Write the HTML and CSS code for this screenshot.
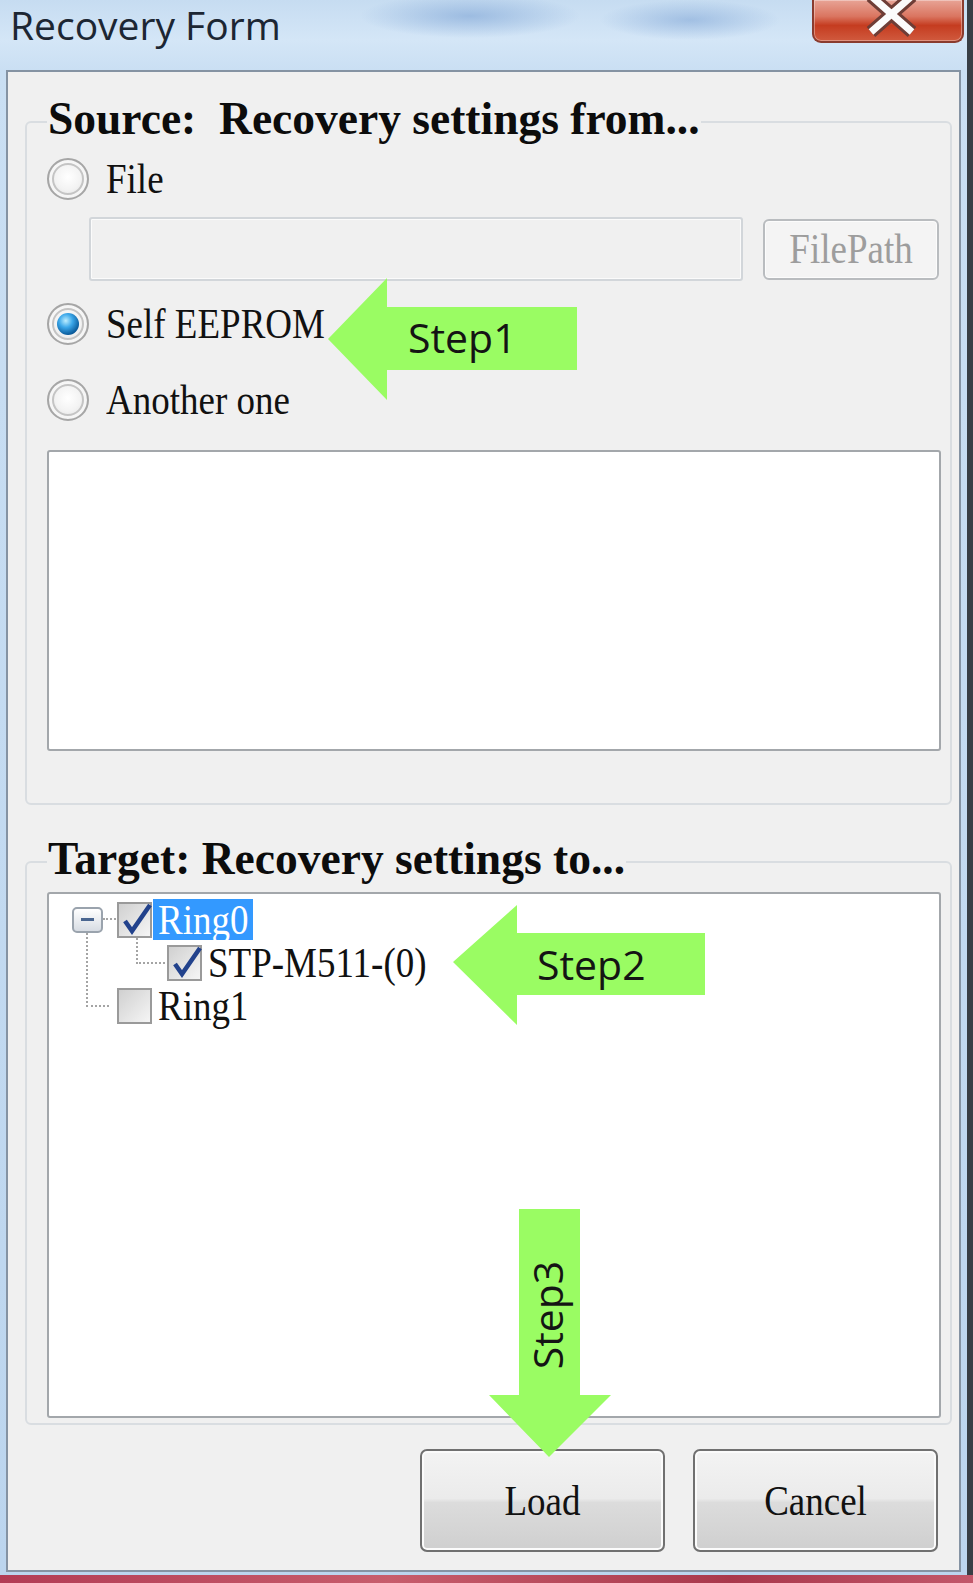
FILE: index.html
```html
<!DOCTYPE html>
<html>
<head>
	<meta charset="utf-8">
	<title>Recovery Form</title>
	<link rel="stylesheet" href="styles.css">
</head>
<body>
	<div class="window">
		<div class="titlebar">
			<span class="title">Recovery Form</span>
			<div class="close">
				<svg width="152" height="43" viewBox="0 0 152 43">
					<path d="M59 -4 L100 32 M100 -4 L59 32" stroke="#6e3d36" stroke-width="13" fill="none"/>
					<path d="M59 -4 L100 32 M100 -4 L59 32" stroke="#fbfbfb" stroke-width="7" fill="none"/>
				</svg>
			</div>
		</div>

		<div class="client">
			<fieldset class="group source">
				<legend>Source:&nbsp; Recovery settings from...</legend>
				<div class="opt"><span class="radio"></span><span class="txt">File</span></div>
				<div class="pathrow">
					<div class="pathbox"></div>
					<div class="btn-path"><span class="txt">FilePath</span></div>
				</div>
				<div class="opt eeprom"><span class="radio on"></span><span class="txt">Self EEPROM</span></div>
				<div class="opt another"><span class="radio"></span><span class="txt">Another one</span></div>
				<div class="listbox"></div>
			</fieldset>

			<fieldset class="group target">
				<legend>Target: Recovery settings to...</legend>
				<div class="tree">
					<div class="node root">
						<span class="expander"></span>
						<span class="check">
							<svg width="36" height="36" viewBox="0 0 36 36">
								<rect x="1" y="1" width="33" height="34" fill="url(#cb)" stroke="#9a9a9a" stroke-width="2"/>
								<path d="M8 19 L15 29 L33 3" stroke="#22428c" stroke-width="4.5" fill="none"/>
							</svg>
						</span>
						<span class="name sel"><span class="txt">Ring0</span></span>
					</div>
					<div class="node child">
						<span class="check">
							<svg width="36" height="36" viewBox="0 0 36 36">
								<rect x="1" y="1" width="33" height="34" fill="url(#cb)" stroke="#9a9a9a" stroke-width="2"/>
								<path d="M8 19 L15 29 L33 3" stroke="#22428c" stroke-width="4.5" fill="none"/>
							</svg>
						</span>
						<span class="name"><span class="txt">STP-M511-(0)</span></span>
					</div>
					<div class="node last">
						<span class="check">
							<svg width="36" height="36" viewBox="0 0 36 36">
								<defs>
									<linearGradient id="cb" x1="0" y1="0" x2="1" y2="1">
										<stop offset="0" stop-color="#cfcfcf"/>
										<stop offset="1" stop-color="#f6f6f6"/>
									</linearGradient>
								</defs>
								<rect x="1" y="1" width="33" height="34" fill="url(#cb)" stroke="#9a9a9a" stroke-width="2"/>
							</svg>
						</span>
						<span class="name"><span class="txt">Ring1</span></span>
					</div>
				</div>
			</fieldset>

			<div class="actions">
				<div class="btn"><span class="txt">Load</span></div>
				<div class="btn"><span class="txt">Cancel</span></div>
			</div>
		</div>

		<!-- green step arrows drawn over the dialog -->
		<svg class="arrow step1" width="253" height="126" viewBox="0 0 253 126">
			<polygon points="2,63 61,2 61,31 251,31 251,94 61,94 61,124" fill="#9afc63"/>
			<text x="82" y="77">Step1</text>
		</svg>
		<svg class="arrow step2" width="256" height="124" viewBox="0 0 256 124">
			<polygon points="2,59 66,2 66,30 254,30 254,92 66,92 66,122" fill="#9afc63"/>
			<text x="86" y="77">Step2</text>
		</svg>
		<svg class="arrow step3" width="126" height="252" viewBox="0 0 126 252">
			<polygon points="32,2 93,2 93,188 124,188 62,250 2,188 32,188" fill="#9afc63"/>
			<text x="63" y="121" text-anchor="middle" transform="rotate(-90 63 108)">Step3</text>
		</svg>
	</div>
	<div class="desk"></div>
</body>
</html>
```

FILE: styles.css
```css
* {
	box-sizing: border-box;
}
body {
	margin: 0;
	width: 973px;
	height: 1583px;
	overflow: hidden;
	background: #383e45;
	font-family: "Liberation Serif", serif;
	color: #111;
}
.window {
	position: relative;
	width: 967px;
	height: 1575px;
	padding: 0 6px 3px 6px;
	background:
		radial-gradient(ellipse 110px 22px at 470px 16px, rgba(118, 158, 210, .55), transparent),
		radial-gradient(ellipse 90px 20px at 690px 20px, rgba(118, 158, 210, .5), transparent),
		linear-gradient(180deg, #c6dcf1 0, #d4e6f7 40px, #cadff3 70px, #bcd5ee 100%);
}
.titlebar {
	height: 70px;
	display: flex;
	align-items: flex-start;
}
.title {
	margin: 5px 0 0 4px;
	font-family: "Open Sans", sans-serif;
	font-size: 39px;
	line-height: 39px;
	color: #1c2633;
}
.close {
	margin-left: auto;
	margin-right: -3px;
	width: 152px;
	height: 43px;
	border: 2px solid #8a3b2e;
	border-top: 0;
	border-radius: 0 0 9px 9px;
	background: linear-gradient(180deg, #e8a496 0, #da7560 40%, #c53c20 62%, #d05a3e 100%);
	box-shadow: inset 0 0 0 1px rgba(255, 255, 255, .35);
	overflow: hidden;
}
.close svg {
	display: block;
	margin: 0 0 0 -2px;
}

.client {
	height: 1502px;
	border: 2px solid #8593a3;
	background: #f0f0f0;
	padding: 24px 7px 0 17px;
	display: flex;
	flex-direction: column;
}
.group {
	margin: 0;
	min-width: 0;
	border: 2px solid #d9dde1;
	border-radius: 6px;
}
.group legend {
	padding: 0 1px 6px;
	font-size: 45.5px;
	font-weight: bold;
	line-height: 46px;
	color: #0c0c0c;
}
.source {
	padding: 9px 9px 52px 20px;
}
.target {
	margin-top: 31px;
	padding: 4px 9px 5px 20px;
}

.txt {
	display: inline-block;
	font-size: 37px;
	line-height: 44px;
	white-space: nowrap;
	transform: scaleY(1.15);
}
.opt {
	display: flex;
	align-items: center;
	gap: 17px;
	height: 44px;
}
.opt.eeprom {
	margin-top: 21px;
}
.opt.another {
	margin-top: 32px;
}
.radio {
	position: relative;
	flex: none;
	width: 42px;
	height: 42px;
	border-radius: 50%;
	border: 2px solid #a6a6a6;
	background: radial-gradient(circle at 50% 45%, #ffffff 0, #f3f3f3 45%, #d4d4d4 100%);
	box-shadow: inset 0 0 0 3px #f6f6f6, inset 0 0 0 5px #c4c4c4;
}
.radio.on::after {
	content: "";
	position: absolute;
	left: 8px;
	top: 8px;
	width: 22px;
	height: 22px;
	border-radius: 50%;
	background: radial-gradient(circle at 40% 35%, #bdeeff 0, #3ba7e9 35%, #0b5c9c 72%, #07345d 100%);
}

.pathrow {
	display: flex;
	align-items: center;
	height: 64px;
	margin-top: 16px;
}
.pathbox {
	margin-left: 42px;
	width: 654px;
	height: 64px;
	border: 2px solid #d2d6da;
	border-radius: 3px;
	background: #f0f0f0;
	box-shadow: inset 0 0 0 1px #fbfbfb;
}
.btn-path {
	margin-left: 20px;
	width: 176px;
	height: 61px;
	display: flex;
	align-items: center;
	justify-content: center;
	border: 2px solid #b9bcbf;
	border-radius: 6px;
	background: #f4f4f4;
	box-shadow: inset 0 0 0 1px #fcfcfc;
	color: #9d9d9d;
}
.listbox {
	margin-top: 28px;
	height: 301px;
	background: #fff;
	border: 2px solid #a3a7ab;
	border-radius: 3px;
}

.tree {
	height: 526px;
	padding-top: 4px;
	background: #fff;
	border: 2px solid #a3a7ab;
	border-radius: 3px;
}
.node {
	position: relative;
	display: flex;
	align-items: center;
	height: 43px;
}
.node::before {
	content: "";
	position: absolute;
	border: 0 dotted #a4a4a4;
}
.root {
	padding-left: 23px;
}
.root::before {
	left: 54px;
	top: 20px;
	width: 13px;
	border-top-width: 2px;
}
.child {
	padding-left: 118px;
}
.child::before {
	left: 87px;
	top: -3px;
	width: 27px;
	height: 24px;
	border-left-width: 2px;
	border-bottom-width: 2px;
}
.last {
	padding-left: 68px;
}
.last::before {
	left: 37px;
	top: -51px;
	width: 21px;
	height: 72px;
	border-left-width: 2px;
	border-bottom-width: 2px;
}
.expander {
	position: relative;
	flex: none;
	width: 31px;
	height: 26px;
	margin-right: 14px;
	border: 2px solid #9aa3ad;
	border-radius: 5px;
	background: linear-gradient(180deg, #ffffff, #d7dce3);
}
.expander::after {
	content: "";
	position: absolute;
	left: 7px;
	top: 9px;
	width: 13px;
	height: 3px;
	background: #4a6690;
}
.check {
	flex: none;
	width: 35px;
	height: 36px;
}
.check svg {
	display: block;
	overflow: visible;
}
.name {
	margin-left: 1px;
	padding: 0 5px;
	height: 41px;
	display: flex;
	align-items: center;
	color: #111;
}
.name.sel {
	background: #3399ff;
	color: #fff;
}

.actions {
	display: flex;
	justify-content: flex-end;
	gap: 28px;
	margin-top: 24px;
	padding-right: 14px;
}
.btn {
	width: 245px;
	height: 103px;
	display: flex;
	align-items: center;
	justify-content: center;
	border: 2px solid #707070;
	border-radius: 7px;
	background: linear-gradient(180deg, #f3f3f3 0, #ebebeb 48%, #dcdcdc 52%, #cfcfcf 100%);
	box-shadow: inset 0 0 0 2px #fbfbfb;
	color: #111;
}

.arrow {
	position: absolute;
}
.arrow text {
	font-family: "Open Sans", sans-serif;
	font-size: 41px;
	fill: #141414;
}
.step1 {
	left: 326px;
	top: 276px;
}
.step2 {
	left: 451px;
	top: 903px;
}
.step3 {
	left: 487px;
	top: 1207px;
}

.desk {
	height: 8px;
	background: linear-gradient(90deg, #b23c55, #c75d6c 40%, #a9384c 75%, #c2576a);
}
```
